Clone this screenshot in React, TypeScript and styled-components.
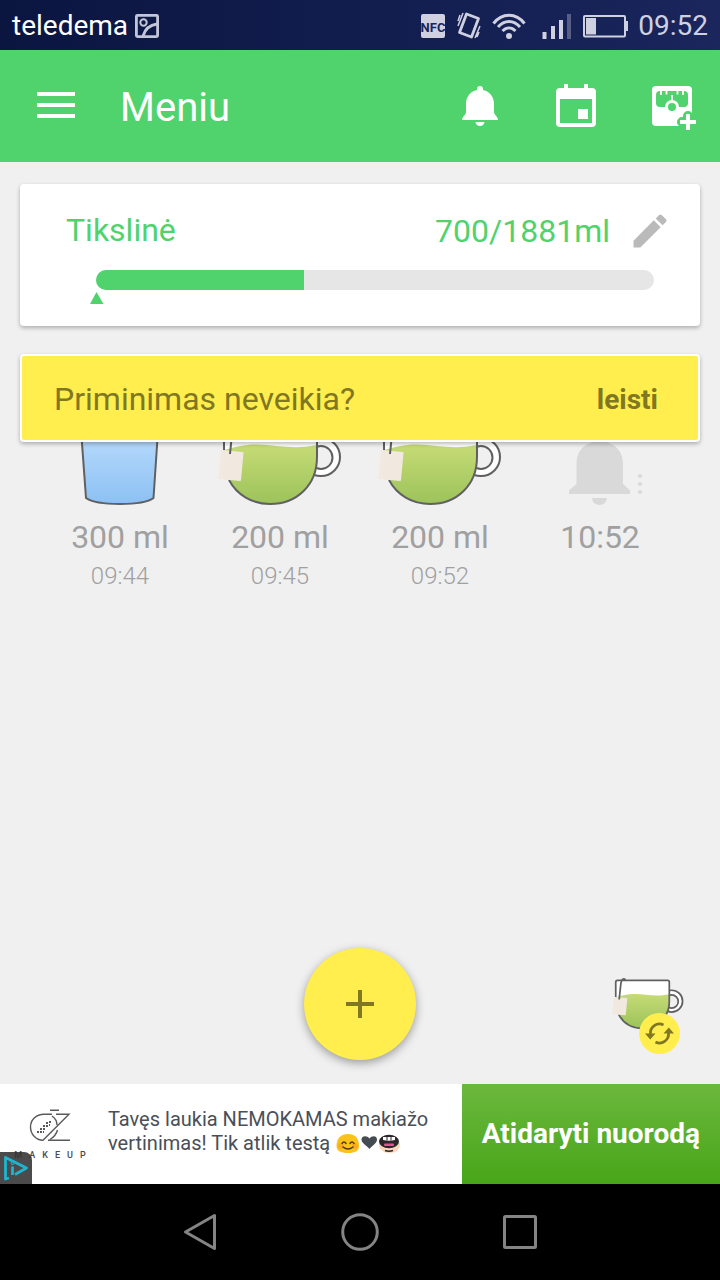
import React from "react";
import styled, { createGlobalStyle } from "styled-components";

const color = {
  green: "#50d26c",
  yellow: "#ffee4d",
  olive: "#7f7722",
  page: "#f0f0f0",
  muted: "#a0a0a0",
  line: "#5f6062",
  status: "#cfd0e0",
};

const GlobalStyle = createGlobalStyle`
  * { box-sizing: border-box; }
  body { margin: 0; background: ${color.page}; font-family: Roboto, "Liberation Sans", sans-serif; }
  button { font: inherit; color: inherit; background: none; border: 0; padding: 0; margin: 0; cursor: pointer; }
  h1, h2, p { margin: 0; font-weight: 400; }
  svg { display: block; flex: none; }
`;

const Screen = styled.div`
  display: flex;
  flex-direction: column;
  min-height: 100vh;
`;

/* ---------- status bar ---------- */

const StatusBar = styled.div`
  display: flex;
  align-items: center;
  justify-content: space-between;
  height: 50px;
  padding: 2px 12px 0;
  background: linear-gradient(90deg, #0a1540, #1a265c);
  font-size: 28px;
  line-height: 32px;
`;

const StatusGroup = styled.div<{ $gap: number; $color: string }>`
  display: flex;
  align-items: center;
  gap: ${(p) => p.$gap}px;
  color: ${(p) => p.$color};
`;

/* ---------- app bar ---------- */

const AppBar = styled.header`
  display: flex;
  align-items: center;
  height: 112px;
  background: ${color.green};
  color: #fff;
`;

const MenuButton = styled.button`
  display: grid;
  place-items: center;
  width: 112px;
  height: 112px;
  padding-bottom: 2px;
`;

const Title = styled.h1`
  flex: 1;
  padding: 4px 0 0 8px;
  font-size: 40px;
  line-height: 48px;
`;

const BarButton = styled.button`
  display: grid;
  place-items: center;
  width: 96px;
  height: 112px;
`;

/* ---------- content ---------- */

const Main = styled.main`
  flex: 1;
  display: flex;
  flex-direction: column;
  padding: 22px 20px 24px;
  background: ${color.page};
`;

const GoalCard = styled.section`
  padding: 24px 28px 22px 46px;
  border-radius: 4px;
  background: #fff;
  box-shadow: 0 2px 4px rgba(0, 0, 0, 0.28);
`;

const GoalRow = styled.div`
  display: flex;
  align-items: center;
  height: 46px;
  color: ${color.green};
  font-size: 32px;
  line-height: 40px;
`;

const GoalName = styled.h2`
  flex: 1;
  padding-bottom: 2px;
  font-size: 32px;
`;

const GoalEdit = styled.button`
  margin-left: 18px;
`;

const Meter = styled.div`
  height: 20px;
  margin: 16px 18px 0 30px;
  border-radius: 10px;
  background: #e6e6e6;
  overflow: hidden;
`;

const MeterFill = styled.div`
  height: 100%;
  background: ${color.green};
`;

const Marker = styled.svg`
  margin: 2px 0 0 24px;
`;

const Reminder = styled.section`
  position: relative;
  z-index: 1;
  display: flex;
  align-items: center;
  justify-content: space-between;
  height: 88px;
  margin-top: 28px;
  padding: 2px 40px 0 32px;
  border: 2px solid #fff;
  border-radius: 4px;
  background: ${color.yellow};
  box-shadow: 0 2px 4px rgba(0, 0, 0, 0.28);
  color: ${color.olive};
  font-size: 32px;
`;

const AllowButton = styled.button`
  font-size: 28px;
  font-weight: 700;
`;

const DrinkList = styled.ul`
  display: grid;
  grid-template-columns: repeat(4, 1fr);
  margin: -27px 0 0;
  padding: 0 20px;
  list-style: none;
`;

const Drink = styled.li`
  display: flex;
  flex-direction: column;
  align-items: center;
  color: ${color.muted};
`;

const Amount = styled.span`
  margin-top: 10px;
  font-size: 32px;
  line-height: 40px;
`;

const Time = styled.span`
  margin-top: 3px;
  font-size: 24px;
  font-weight: 300;
  line-height: 32px;
`;

const Actions = styled.div`
  display: grid;
  grid-template-columns: 1fr auto 1fr;
  align-items: center;
  margin-top: auto;
`;

const AddButton = styled.button`
  grid-column: 2;
  display: grid;
  place-items: center;
  width: 112px;
  height: 112px;
  border-radius: 50%;
  background: ${color.yellow};
  box-shadow: 0 3px 10px rgba(0, 0, 0, 0.36);
`;

const CupSlot = styled.div`
  display: flex;
  justify-content: flex-end;
  height: 112px;
  padding: 29px 15px 0 0;
`;

const CupButton = styled.button`
  position: relative;
  height: 53px;
`;

const SwapBadge = styled.svg`
  position: absolute;
  right: 5px;
  bottom: -24px;
`;

/* ---------- advert ---------- */

const Advert = styled.aside`
  position: relative;
  display: flex;
  min-height: 100px;
  background: #fff;
`;

const AdBrand = styled.div`
  display: flex;
  flex-direction: column;
  align-items: center;
  width: 100px;
  margin-right: 8px;
  padding-top: 22px;
  color: #4b4b4b;
  font-size: 9px;
  font-weight: 500;
  line-height: 12px;
`;

const BrandName = styled.span`
  margin-top: 5px;
  padding-left: 7px;
  letter-spacing: 7px;
`;

const AdText = styled.p`
  flex: 1;
  align-self: center;
  padding-bottom: 6px;
  color: #4a4f57;
  font-size: 20px;
  line-height: 24px;
`;

const AdLine = styled.span`
  display: flex;
  align-items: center;
  white-space: pre;
`;

const AdLink = styled.a`
  display: grid;
  place-items: center;
  padding: 0 20px 2px;
  background: linear-gradient(#6cb83d, #48a519);
  color: #fff;
  font-size: 28px;
  font-weight: 700;
  text-decoration: none;
  white-space: nowrap;
`;

const AdChoices = styled.button`
  position: absolute;
  left: 0;
  bottom: 0;
  width: 32px;
  height: 32px;
  border-radius: 0 8px 0 0;
  background: rgba(50, 50, 50, 0.88);
`;

/* ---------- system navigation ---------- */

const NavBar = styled.nav`
  display: flex;
  justify-content: center;
  height: 96px;
  background: #000;
`;

const NavButton = styled.button`
  display: grid;
  place-items: center;
  width: 160px;
`;

/* ---------- drawings ---------- */

function TeaCup({ id, width, height, stroke }: { id: string; width: number; height: number; stroke: number }) {
  return (
    <svg width={width} height={height} viewBox="216 415 128 92" fill="none" stroke={color.line} strokeWidth={stroke}>
      <defs>
        <linearGradient id={id} x1="0" y1="0" x2="0" y2="1">
          <stop offset="0" stopColor="#c6db76" />
          <stop offset="1" stopColor="#9cc35a" />
        </linearGradient>
      </defs>
      <circle cx="321" cy="457" r="15.3" stroke="#fff" strokeWidth="7" />
      <circle cx="321" cy="457" r="19" />
      <circle cx="321" cy="457.500" r="11.500" fill={color.page} />
      <path d="M226 421H314Q317 421 317 424V457C317 485 297 504 270 504S224 485 224 457V423Q224 421 226 421Z" fill="#fff" stroke="none" />
      <path d="M224 450C235 447 246 444 258 444.500C276 445 294 450 317 445V457C317 485 297 504 270 504S224 485 224 457Z" fill={`url(#${id})`} stroke="none" />
      <path d="M224 450V424Q224 421 227 421H314Q317 421 317 424V457C317 485 297 504 270 504C252 504 237 495 229 480" />
      <path d="M222 451L242.500 453L240 480L219.500 478Z" fill="#f1e8e0" stroke="#f1e8e0" strokeLinejoin="round" />
      <path d="M241 420C237 416 234 420 233 426C232 434 231 444 230 454" />
    </svg>
  );
}

function Glass() {
  return (
    <svg width="128" height="92" viewBox="56 415 128 92">
      <defs>
        <linearGradient id="water" x1="0" y1="0" x2="0" y2="1">
          <stop offset="0.2" stopColor="#b8dafc" />
          <stop offset="1" stopColor="#8cc1f4" />
        </linearGradient>
      </defs>
      <path d="M80 416L86 498C97 506 143 506 153.500 498L159 416" fill="url(#water)" stroke={color.line} strokeWidth="2" strokeLinejoin="round" />
    </svg>
  );
}

function NextReminder() {
  return (
    <svg width="128" height="92" viewBox="536 415 128 92" fill="#d9d9d9">
      <path d="M599.500 435a5 5 0 0 1 5 5v1.500C616 444 623 452 623 464V484L630 490.500V494H569V490.500L576.500 484V464C576.500 452 583 444 594.500 441.500V440a5 5 0 0 1 5-5Z" />
      <path d="M592 498H607A7.500 7 0 0 1 592 498Z" />
      <circle cx="640" cy="476" r="2" />
      <circle cx="640" cy="484" r="2" />
      <circle cx="640" cy="492" r="2" />
    </svg>
  );
}

function BellIcon() {
  return (
    <svg width="48" height="48" viewBox="0 0 48 48" fill="#fff">
      <path d="M24 4a3 3 0 0 1 3 3v1C34 9.500 38 15 38 22V30C38 33 42 34.500 42 38H6C6 34.500 10 33 10 30V22C10 15 14 9.500 21 8V7a3 3 0 0 1 3-3Z" />
      <path d="M19.500 40h9a4.500 4 0 0 1-9 0Z" />
    </svg>
  );
}

function CalendarIcon() {
  return (
    <svg width="48" height="48" viewBox="0 0 48 48" fill="#fff">
      <path fillRule="evenodd" d="M12 2h4v4h16V2h4v4h4q4 0 4 4v31q0 4-4 4H8q-4 0-4-4V10q0-4 4-4h4ZM8 17v24h32V17Z" />
      <path d="M26 27h10v10H26Z" />
    </svg>
  );
}

function ScaleIcon() {
  return (
    <svg width="48" height="48" viewBox="0 0 48 48" overflow="visible" fill="#fff">
      <rect x="4" y="4" width="40" height="40" rx="4" />
      <rect x="8" y="9" width="32" height="16" rx="4" fill={color.green} />
      <path d="M13 8v5M18.500 8v4.500M29.500 8v4.500M35 8v5M24 13v6" stroke="#fff" strokeWidth="1.800" />
      <circle cx="24" cy="25" r="7" />
      <circle cx="24" cy="25" r="4" fill={color.green} />
      <path d="M40 34v12M34 40h12" stroke={color.green} strokeWidth="10" strokeLinecap="round" />
      <path d="M40 32v16M32 40h16" stroke="#fff" strokeWidth="4" />
    </svg>
  );
}

function PictureIcon() {
  return (
    <svg width="24" height="24" viewBox="0 0 24 24" fill="none" stroke="#c3c6d8" strokeWidth="2.800">
      <rect x="1.400" y="1.400" width="21.200" height="21.200" rx="1" />
      <circle cx="8.500" cy="8.500" r="3.200" strokeWidth="2" />
      <path d="M8 22C10 15 15 11 22 10" />
    </svg>
  );
}

function StatusIcons() {
  return (
    <svg width="208" height="28" viewBox="420 11 208 28" fill="none" stroke="currentColor">
      <rect x="421" y="13" width="24" height="24" rx="2" fill="currentColor" stroke="none" />
      <text x="433" y="31" fontFamily="'Liberation Sans Narrow', Roboto, sans-serif" fontSize="13" fontWeight="700" textAnchor="middle" fill="#1a265c" stroke="none">NFC</text>
      <path d="M466.500 13L478.500 17.500L471.500 36L459.500 31.500Z" strokeWidth="2.800" strokeLinejoin="round" />
      <path d="M463 12L458 25M460 14L458 20M480 25L475 37M479 31L477 36" strokeWidth="1.500" />
      <path d="M493.500 22.500C502 11.500 516 11.500 524.500 22.500M498 26C504.500 18.500 513.500 18.500 520 26M502.500 30C506.500 26 511.500 26 515.500 30" strokeWidth="3" />
      <circle cx="509" cy="35" r="3" fill="currentColor" stroke="none" />
      <path d="M544.500 38V31M553 38V25M561 38V19" strokeWidth="4" />
      <path d="M569 38V13" strokeWidth="4" opacity="0.35" />
      <rect x="584" y="15" width="41" height="20.500" rx="1" strokeWidth="2" />
      <path d="M586 17h10v16.500h-10ZM625 20h3v10h-3Z" fill="currentColor" stroke="none" />
    </svg>
  );
}

function BrandLogo() {
  return (
    <svg width="48" height="38" viewBox="26 1106 48 38" fill="none" stroke="#5a5a5a" strokeWidth="1.400">
      <path d="M50 1110.300H59M52 1114.300H44C36 1114.300 30.500 1120 30.500 1127S36 1140.300 43 1140.300L69 1114.300H56M48 1140.300H70" />
      <path d="M52 1116C55 1118 57 1121 57 1125M57.500 1130C56.500 1134 54 1137 50 1139.500" />
      <path d="M37 1132h2M40 1132h2M40 1129h2M43 1129h2M43 1126h2M46 1126h2M46 1123h2M49 1122h2M43 1132h1M49 1125h1" strokeWidth="2" />
    </svg>
  );
}

function Emojis() {
  return (
    <svg width="66" height="24" viewBox="335 1131 66 24" role="img" aria-label="😊♥😬">
      <path d="M348 1134C356 1134 359 1139 359 1146C359 1151 355 1153 348 1153S336.500 1151 336.500 1146C336.500 1139 340 1134 348 1134Z" fill="#fcc21b" />
      <circle cx="341" cy="1146" r="3" fill="#f79329" opacity="0.5" />
      <circle cx="355" cy="1146" r="3" fill="#f79329" opacity="0.5" />
      <path d="M342 1143.500q2-3 4 0M350 1143.500q2-3 4 0M343 1147q5 4 10 0" fill="none" stroke="#4a3b20" strokeWidth="1.500" strokeLinecap="round" />
      <path d="M369.500 1149C366 1145 361.500 1143 361.500 1139.500C361.500 1135.500 367 1135 369.500 1138.500C372 1135 377 1135.500 377 1139.500C377 1143 373 1145 369.500 1149Z" fill="#444b51" />
      <ellipse cx="389.500" cy="1145" rx="10.500" ry="8" fill="#fbd7bd" />
      <ellipse cx="389" cy="1141.500" rx="10" ry="6.800" fill="#2b2629" />
      <path d="M383 1137h12v3q-6 1.500-12 0Z" fill="#fff" />
      <path d="M387 1136.500v4M391 1136.500v4" stroke="#2b2629" strokeWidth="1" />
      <rect x="384" y="1143.500" width="10" height="2.500" rx="1" fill="#e0548f" />
      <path d="M385 1150.500q4 1.500 8 0" fill="none" stroke="#2b2629" strokeWidth="1.500" />
    </svg>
  );
}

const drinks = [
  { amount: "300 ml", time: "09:44", icon: <Glass /> },
  { amount: "200 ml", time: "09:45", icon: <TeaCup id="tea1" width={128} height={92} stroke={2} /> },
  { amount: "200 ml", time: "09:52", icon: <TeaCup id="tea2" width={128} height={92} stroke={2} /> },
  { amount: "10:52", time: "", icon: <NextReminder /> },
];

const goal = { drunk: 700, target: 1881 };

export default function App() {
  const percent = (goal.drunk / goal.target) * 100;
  return (
    <Screen>
      <GlobalStyle />
      <StatusBar>
        <StatusGroup $gap={7} $color="#fff">
          <span>teledema</span>
          <PictureIcon />
        </StatusGroup>
        <StatusGroup $gap={10} $color={color.status}>
          <StatusIcons />
          <span>09:52</span>
        </StatusGroup>
      </StatusBar>

      <AppBar>
        <MenuButton aria-label="Meniu">
          <svg width="38" height="26" viewBox="0 0 38 26" fill="#fff">
            <path d="M0 0h38v4H0ZM0 11h38v4H0ZM0 22h38v4H0Z" />
          </svg>
        </MenuButton>
        <Title>Meniu</Title>
        <BarButton aria-label="Priminimai"><BellIcon /></BarButton>
        <BarButton aria-label="Kalendorius"><CalendarIcon /></BarButton>
        <BarButton aria-label="Svoris"><ScaleIcon /></BarButton>
      </AppBar>

      <Main>
        <GoalCard>
          <GoalRow>
            <GoalName>Tikslinė</GoalName>
            <span>{goal.drunk}/{goal.target}ml</span>
            <GoalEdit aria-label="Redaguoti">
              <svg width="44" height="44" viewBox="0 0 24 24" fill="#bababa">
                <path d="M3 17.250V21h3.750L17.810 9.940l-3.750-3.750L3 17.250ZM20.710 7.040a1 1 0 0 0 0-1.410l-2.340-2.340a1 1 0 0 0-1.410 0l-1.830 1.830 3.750 3.750 1.830-1.830Z" />
              </svg>
            </GoalEdit>
          </GoalRow>
          <Meter role="progressbar" aria-label="Tikslinė" aria-valuenow={goal.drunk} aria-valuemax={goal.target}>
            <MeterFill style={{ width: `${percent}%` }} />
          </Meter>
          <Marker width="14" height="12" viewBox="0 0 14 12" fill={color.green}>
            <path d="M6.500 0L13.500 12H0Z" />
          </Marker>
        </GoalCard>

        <Reminder>
          <span>Priminimas neveikia?</span>
          <AllowButton>leisti</AllowButton>
        </Reminder>

        <DrinkList>
          {drinks.map((d, i) => (
            <Drink key={i}>
              {d.icon}
              <Amount>{d.amount}</Amount>
              {d.time && <Time>{d.time}</Time>}
            </Drink>
          ))}
        </DrinkList>

        <Actions>
          <AddButton aria-label="Pridėti">
            <svg width="28" height="28" viewBox="0 0 28 28" fill={color.olive}>
              <path d="M12 0h4v12h12v4H16v12h-4V16H0v-4h12Z" />
            </svg>
          </AddButton>
          <CupSlot>
            <CupButton aria-label="Keisti puodelį">
              <TeaCup id="tea3" width={74} height={53} stroke={3} />
              <SwapBadge width="41" height="41" viewBox="0 0 41 41" fill="none" stroke={color.olive} strokeWidth="2.800">
                <circle cx="20.500" cy="20.500" r="20.500" fill={color.yellow} stroke="none" />
                <path d="M24.500 12A9 9 0 0 0 11.500 21M16.500 29A9 9 0 0 0 29.500 20" />
                <path d="M6 20.500H16.500L11.200 26.500ZM24.500 20.500H35L29.800 14.500Z" fill={color.olive} stroke="none" />
              </SwapBadge>
            </CupButton>
          </CupSlot>
        </Actions>
      </Main>

      <Advert>
        <AdBrand>
          <BrandLogo />
          <BrandName>MAKEUP</BrandName>
        </AdBrand>
        <AdText>
          <AdLine>Tavęs laukia NEMOKAMAS makiažo</AdLine>
          <AdLine>vertinimas! Tik atlik testą <Emojis /></AdLine>
        </AdText>
        <AdLink href="#">Atidaryti nuorodą</AdLink>
        <AdChoices aria-label="Apie skelbimą">
          <svg width="32" height="32" viewBox="0 0 32 32" fill="none" stroke="#1fb4cf" strokeWidth="2.800" strokeLinejoin="round">
            <path d="M9 26L5.500 27V5.500L26.500 16L15 22.500" />
            <path d="M12.500 14.500V23" />
            <circle cx="12.500" cy="11" r="0.500" />
          </svg>
        </AdChoices>
      </Advert>

      <NavBar>
        <NavButton aria-label="Atgal">
          <svg width="40" height="40" viewBox="0 0 40 40" fill="none" stroke="#848484" strokeWidth="3" strokeLinejoin="round">
            <path d="M34.500 3.500V36.500L5.500 20Z" />
          </svg>
        </NavButton>
        <NavButton aria-label="Pradžia">
          <svg width="40" height="40" viewBox="0 0 40 40" fill="none" stroke="#848484" strokeWidth="3">
            <circle cx="20" cy="20" r="17.300" />
          </svg>
        </NavButton>
        <NavButton aria-label="Naujausios">
          <svg width="40" height="40" viewBox="0 0 40 40" fill="none" stroke="#848484" strokeWidth="3">
            <rect x="4.500" y="4.500" width="31" height="31" rx="1" />
          </svg>
        </NavButton>
      </NavBar>
    </Screen>
  );
}
